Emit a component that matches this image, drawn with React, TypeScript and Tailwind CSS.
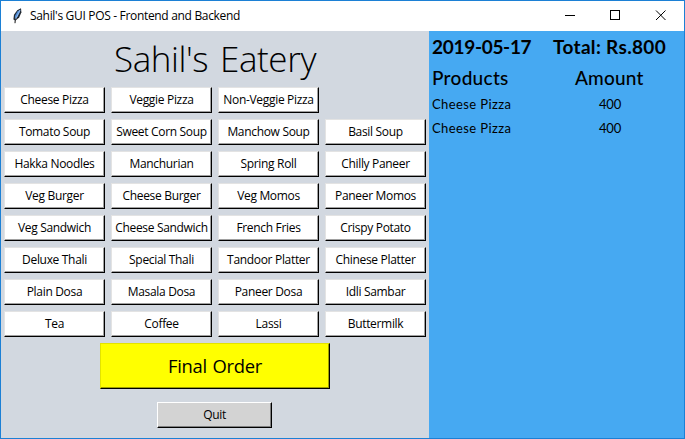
const menu: string[] = [
  "Cheese Pizza", "Veggie Pizza", "Non-Veggie Pizza", "",
  "Tomato Soup", "Sweet Corn Soup", "Manchow Soup", "Basil Soup",
  "Hakka Noodles", "Manchurian", "Spring Roll", "Chilly Paneer",
  "Veg Burger", "Cheese Burger", "Veg Momos", "Paneer Momos",
  "Veg Sandwich", "Cheese Sandwich", "French Fries", "Crispy Potato",
  "Deluxe Thali", "Special Thali", "Tandoor Platter", "Chinese Platter",
  "Plain Dosa", "Masala Dosa", "Paneer Dosa", "Idli Sambar",
  "Tea", "Coffee", "Lassi", "Buttermilk",
];

const order = [
  { name: "Cheese Pizza", amount: 400 },
  { name: "Cheese Pizza", amount: 400 },
];

function MenuButton({ label }: { label: string }) {
  return (
    <button className="flex h-[26px] w-[101px] items-center justify-center border-t border-r border-b border-l border-t-[#e3e3e3] border-l-[#e3e3e3] border-r-black border-b-black bg-white whitespace-nowrap shadow-[inset_-1px_-1px_0_#a0a0a0]">
      <span className="text-[12px] leading-4 tracking-[-0.32px]">{label}</span>
    </button>
  );
}

function TitleBar() {
  return (
    <header className="flex h-[30px] shrink-0 items-center bg-white">
      <svg className="ml-[10px] h-4 w-4" viewBox="0 0 16 16">
        <path d="M10 .2 6.2 2.2 3 6.8 2.4 11.6l2.2 1 3.6-3.2L10.4 4.2Z" fill="#20262e" />
        <path d="M9.4 1.4 6.4 3.6 4 7.8 3.8 10.8 6.8 8.2 9 4Z" fill="#4b8ad6" />
        <path d="M9 2 4 12.5" stroke="#a9c7ed" strokeWidth=".8" />
        <path d="M4.3 11 4 15.2" stroke="#111" strokeWidth="1" />
      </svg>
      <h1 className="ml-[3px] text-[12px] tracking-[-0.32px] whitespace-nowrap">Sahil's GUI POS - Frontend and Backend</h1>
      <svg className="ml-auto h-[30px] w-[138px]" viewBox="0 0 138 30" fill="none" stroke="#000" shapeRendering="crispEdges">
        <path d="M19 14.5h10" />
        <path d="M64.5 9.5h9v9h-9z" />
        <path d="m110 9.5 9.5 9.5m0-9.5-9.5 9.5" shapeRendering="auto" />
      </svg>
    </header>
  );
}

export default function App() {
  return (
    <div className="flex h-[439px] w-[685px] flex-col overflow-hidden border border-[#1c80d5] bg-white font-['Open_Sans','Noto_Sans',sans-serif] text-black">
      <TitleBar />
      <main className="flex min-h-0 flex-1">
        <section className="flex w-[428px] shrink-0 flex-col items-center bg-[#d2d8e0]">
          <h2 className="flex h-14 items-center pt-px text-[35px] font-[350] tracking-[-0.4px] [word-spacing:3px] whitespace-pre">Sahil's Eatery</h2>
          <div className="grid grid-cols-[repeat(4,101px)] gap-[6px]">
            {menu.map((label, i) => (label ? <MenuButton key={label} label={label} /> : <div key={i} />))}
          </div>
          <button className="mt-[6px] flex h-[46px] w-[230px] items-center justify-center border border-t-[#e3e300] border-r-black border-b-black border-l-[#e3e300] bg-[#ffff00] text-[18.4px] tracking-[-0.25px] [word-spacing:1px] shadow-[inset_-1px_-1px_0_#a0a000]">Final Order</button>
          <button className="mt-[13px] mr-px flex h-[26px] w-[115px] items-center justify-center border border-t-white border-r-black border-b-black border-l-white bg-[#d3d3d3] text-[12px] tracking-[-0.32px] shadow-[inset_-1px_-1px_0_#808080]">Quit</button>
        </section>
        <aside className="flex flex-1 flex-col bg-[#46a9f2] pl-[3px] font-[Lato,'Open_Sans',sans-serif] whitespace-nowrap">
          <div className="flex h-8 items-center pt-px text-[19px] font-bold">
            <span className="w-[121px] tracking-[-0.3px]">2019-05-17</span>
            <span className="tracking-[0.33px]">Total: Rs.800</span>
          </div>
          <div className="flex h-[30px] items-center text-[19px] font-medium">
            <span className="w-[143px] tracking-[0.3px]">Products</span>
            <span className="tracking-[0.2px]">Amount</span>
          </div>
          {order.map((item, i) => (
            <div key={i} className="flex h-6 items-center text-[13px]">
              <span className="w-[167px] tracking-[0.4px]">{item.name}</span>
              <span className="tracking-[-0.2px]">{item.amount}</span>
            </div>
          ))}
        </aside>
      </main>
    </div>
  );
}
